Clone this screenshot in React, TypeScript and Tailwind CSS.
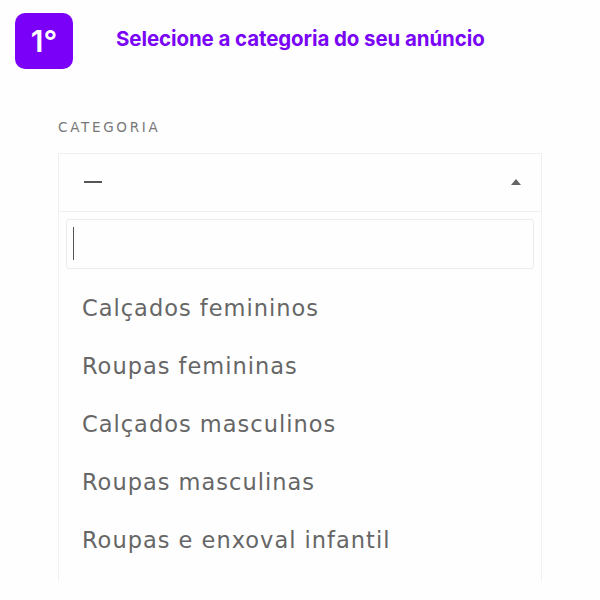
export default function App() {
  const options = [
    "Calçados femininos",
    "Roupas femininas",
    "Calçados masculinos",
    "Roupas masculinas",
    "Roupas e enxoval infantil",
  ];

  return (
    <div className="w-[600px] h-[600px] bg-[#fefefe] overflow-hidden relative font-['DejaVu_Sans',sans-serif]">
      {/* header */}
      <div className="flex items-center pt-[13px] pl-[15px]">
        <div className="w-[58px] h-[56px] rounded-[10px] bg-[#7b00f7] flex items-center justify-center">
          <span className="text-white text-[30px] font-semibold font-['Inter',sans-serif] leading-none">
            1°
          </span>
        </div>
        <h1 className="ml-[43px] -mt-[3px] text-[20.5px] font-bold text-[#7a04f5] font-['Inter',sans-serif] tracking-[-0.1px]">
          Selecione a categoria do seu anúncio
        </h1>
      </div>

      <div className="px-[58px] mt-[52px]">
        <p className="text-[13.5px] tracking-[2.7px] text-[#777] leading-none">CATEGORIA</p>

        {/* select */}
        <div className="mt-[18px] border border-[#efefef] h-[59px] flex items-center justify-between pl-[25px] pr-[20px]">
          <div className="w-[18px] h-[2px] bg-[#555]" />
          <div className="w-0 h-0 border-l-[5px] border-r-[5px] border-b-[6px] border-l-transparent border-r-transparent border-b-[#666]" />
        </div>

        {/* dropdown */}
        <div className="border-x border-[#f2f2f2] h-[370px] pt-[7px] px-[7px]">
          <div className="h-[50px] border border-[#ececec] rounded-[3px] flex items-center pl-[6px]">
            <div className="w-[1px] h-[33px] bg-[#555]" />
          </div>
          <ul className="mt-[19px] pl-[16px]">
            {options.map(o => (
              <li
                key={o}
                className="h-[58px] text-[22.5px] tracking-[1px] text-[#666] leading-[40px]"
              >
                {o}
              </li>
            ))}
          </ul>
        </div>
      </div>
    </div>
  );
}
